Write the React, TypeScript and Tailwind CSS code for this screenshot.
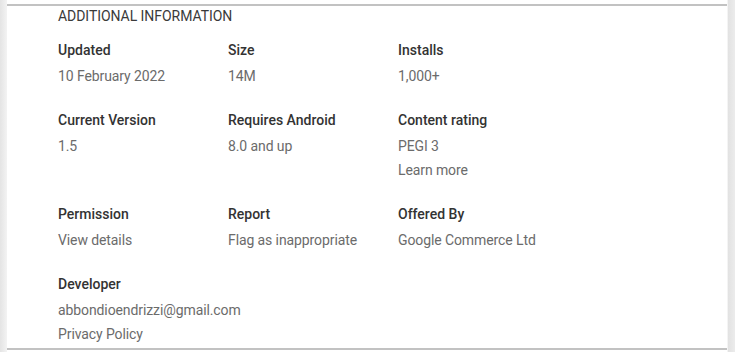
type Field = {
  label: string
  values: string[]
}

const rows: Field[][] = [
  [
    { label: 'Updated', values: ['10 February 2022'] },
    { label: 'Size', values: ['14M'] },
    { label: 'Installs', values: ['1,000+'] },
  ],
  [
    { label: 'Current Version', values: ['1.5'] },
    { label: 'Requires Android', values: ['8.0 and up'] },
    { label: 'Content rating', values: ['PEGI 3', 'Learn more'] },
  ],
  [
    { label: 'Permission', values: ['View details'] },
    { label: 'Report', values: ['Flag as inappropriate'] },
    { label: 'Offered By', values: ['Google Commerce Ltd'] },
  ],
  [{ label: 'Developer', values: ['abbondioendrizzi@gmail.com', 'Privacy Policy'] }],
]

function InfoItem({ label, values }: Field) {
  return (
    <div className="w-[170px]">
      <div className="mb-[2px] text-[14px] leading-6 font-medium text-[#333]">{label}</div>
      {values.map((v) => (
        <div key={v} className="text-[14px] leading-6 tracking-[-0.1px] text-[#6b6b6b]">
          {v}
        </div>
      ))}
    </div>
  )
}

export default function App() {
  return (
    <div
      className="flex h-[352px] w-[735px] overflow-hidden bg-white"
      style={{ fontFamily: 'Roboto, "Liberation Sans", sans-serif' }}
    >
      <div className="w-[7px] shrink-0 bg-gradient-to-r from-[#e4e4e4] to-[#f3f3f3]" />
      <div className="flex w-[720px] shrink-0 flex-col bg-white pt-[4px]">
        <div className="h-[2px] bg-[#c2c2c2]" />
        <div className="flex-1 pl-[51px]">
          <h2 className="text-[14px] leading-5 font-normal tracking-[-0.05px] text-[#3a3a3a] uppercase">
            Additional Information
          </h2>
          <div className="mt-3 flex flex-col gap-5">
            {rows.map((row, i) => (
              <div key={i} className="flex">
                {row.map((f) => (
                  <InfoItem key={f.label} {...f} />
                ))}
              </div>
            ))}
          </div>
        </div>
        <div className="mb-[2px] h-[2px] bg-[#c2c2c2]" />
      </div>
      <div className="w-[8px] shrink-0 border-l border-[#f4f4f4] bg-gradient-to-r from-[#e2e2e2] to-[#ececec]" />
    </div>
  )
}
